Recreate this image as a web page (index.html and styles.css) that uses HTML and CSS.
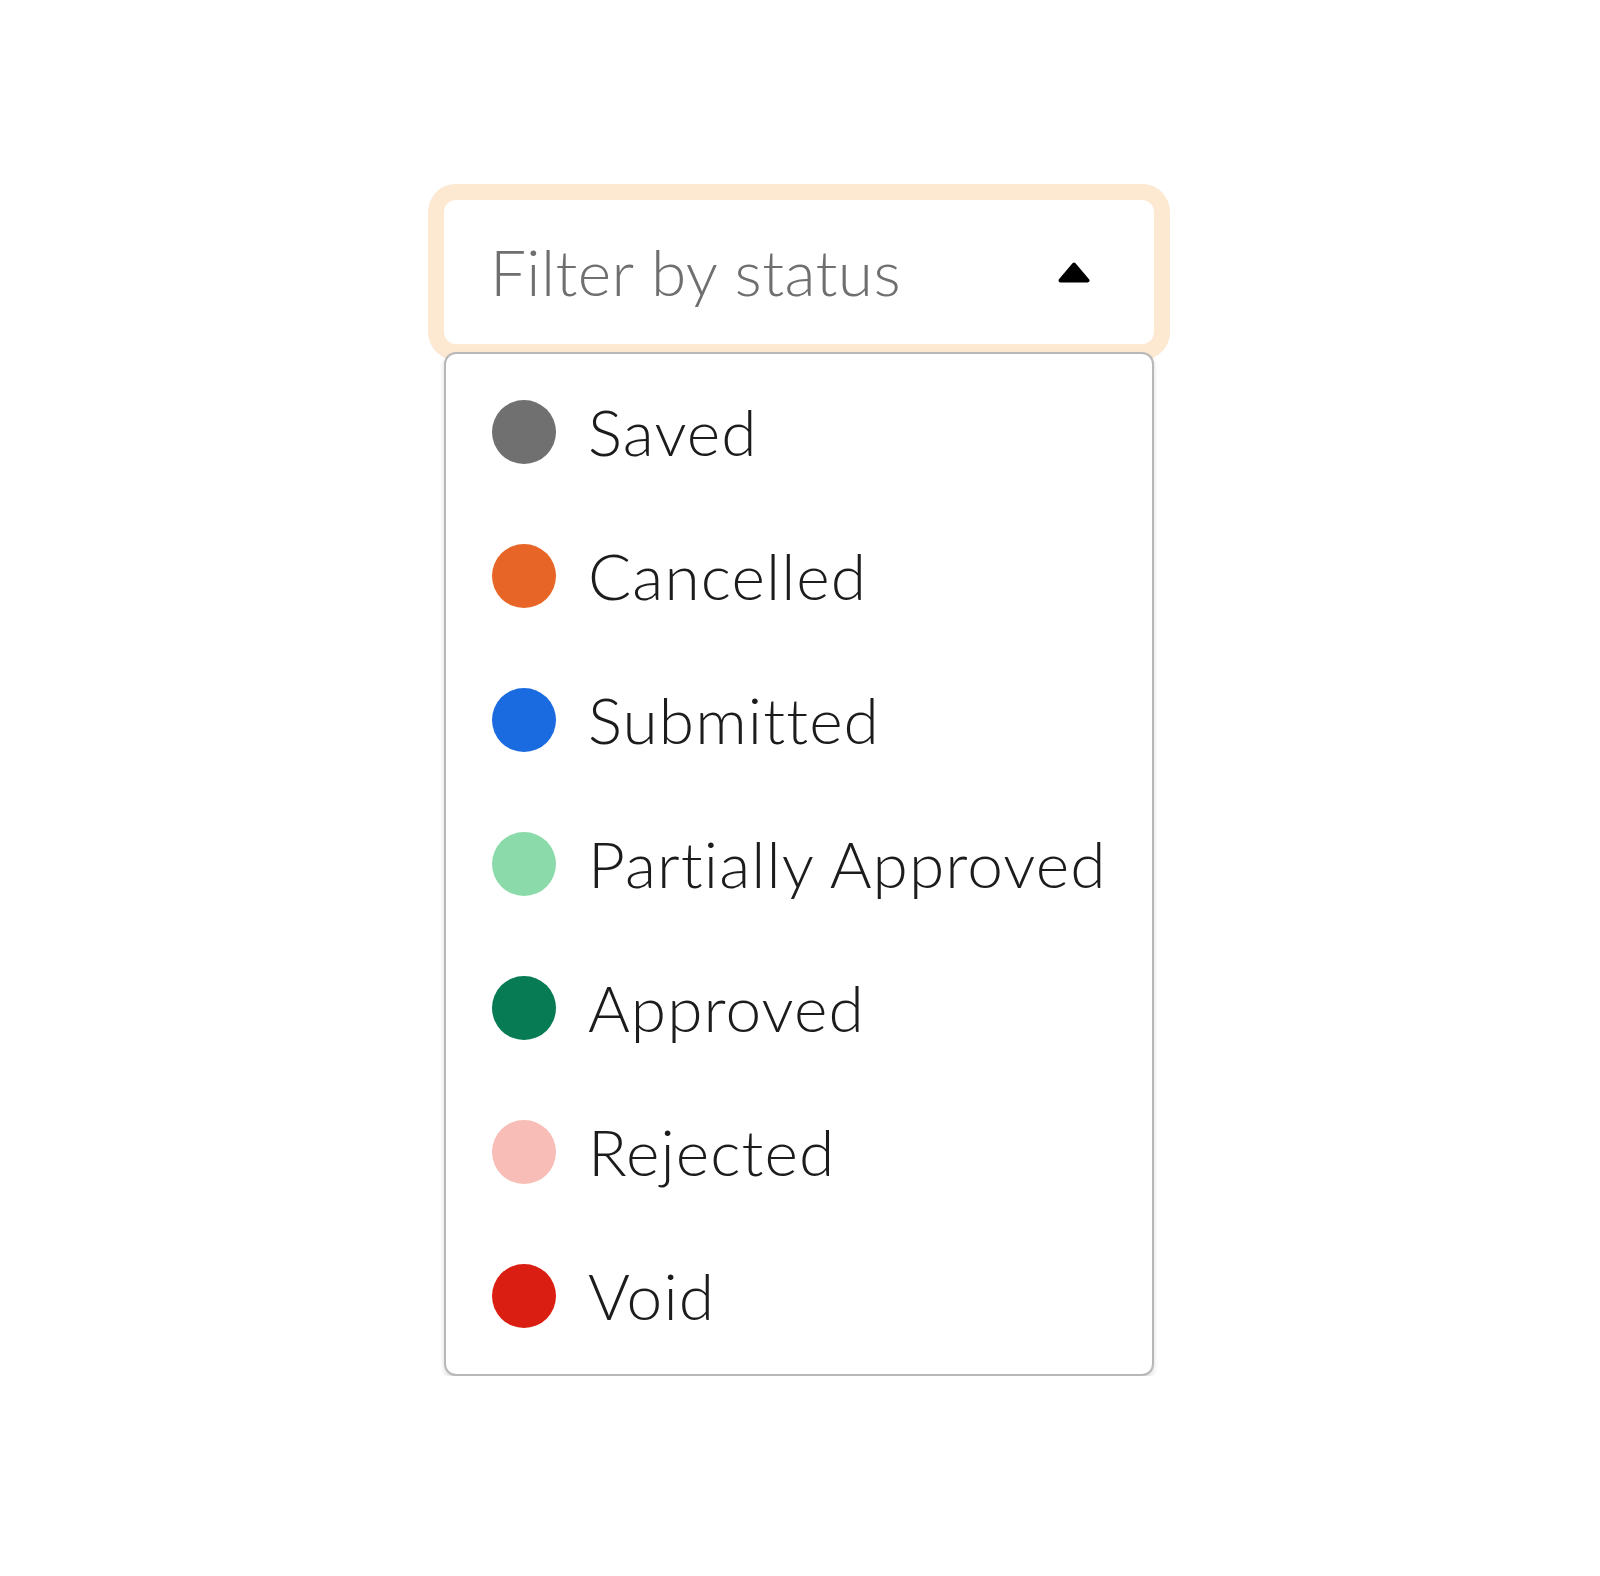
FILE: index.html
```html
<!DOCTYPE html>
<html lang="en">
<head>
<meta charset="utf-8">
<title>Filter by status</title>
<link rel="stylesheet" href="styles.css">
</head>
<body>
<div class="filter">
  <div class="select">
    <span class="placeholder">Filter by status</span>
    <svg class="caret" width="32" height="21" viewBox="0 0 32 21" aria-hidden="true">
      <polygon points="16,2.5 29.5,18.5 2.5,18.5" fill="#000" stroke="#000" stroke-width="4" stroke-linejoin="round"/>
    </svg>
  </div>
  <ul class="menu">
    <li class="option"><span class="dot dot-saved"></span><span class="label">Saved</span></li>
    <li class="option"><span class="dot dot-cancelled"></span><span class="label">Cancelled</span></li>
    <li class="option"><span class="dot dot-submitted"></span><span class="label">Submitted</span></li>
    <li class="option"><span class="dot dot-partial"></span><span class="label">Partially Approved</span></li>
    <li class="option"><span class="dot dot-approved"></span><span class="label">Approved</span></li>
    <li class="option"><span class="dot dot-rejected"></span><span class="label">Rejected</span></li>
    <li class="option"><span class="dot dot-void"></span><span class="label">Void</span></li>
  </ul>
</div>
</body>
</html>
```

FILE: styles.css
```css
html, body {
  margin: 0;
  padding: 0;
  background: #ffffff;
}

body {
  font-family: "Lato", "Liberation Sans", sans-serif;
  font-weight: 300;
  font-variant-ligatures: none;
  font-feature-settings: "liga" 0, "clig" 0;
}

.filter {
  width: 710px;
  margin: 200px 0 0 444px;
}

.select {
  box-sizing: border-box;
  height: 144px;
  display: flex;
  align-items: center;
  justify-content: space-between;
  padding: 0 64px 0 46px;
  background: #ffffff;
  border-radius: 12px;
  box-shadow: 0 0 0 16px #fde8d2;
}

.placeholder {
  font-size: 64px;
  line-height: 1;
  letter-spacing: 0.4px;
  color: #6f6f6f;
}

.caret {
  display: block;
}

.menu {
  position: relative;
  z-index: 1;
  list-style: none;
  margin: 8px 0 0 0;
  padding: 6px 0;
  background: #ffffff;
  border: 2px solid #b8b8b8;
  border-radius: 12px;
  box-shadow: 0 3px 5px rgba(0, 0, 0, 0.14);
}

.option {
  height: 144px;
  display: flex;
  align-items: center;
  gap: 32px;
  padding-left: 46px;
}

.dot {
  flex: none;
  width: 64px;
  height: 64px;
  border-radius: 50%;
}

.label {
  font-size: 64px;
  line-height: 1;
  letter-spacing: 1.1px;
  color: #1c1c1c;
}

.dot-saved { background: #707070; }
.dot-cancelled { background: #e86528; }
.dot-submitted { background: #1b6be0; }
.dot-partial { background: #8bdbaa; }
.dot-approved { background: #077b53; }
.dot-rejected { background: #f9bdb7; }
.dot-void { background: #da1f12; }
```
